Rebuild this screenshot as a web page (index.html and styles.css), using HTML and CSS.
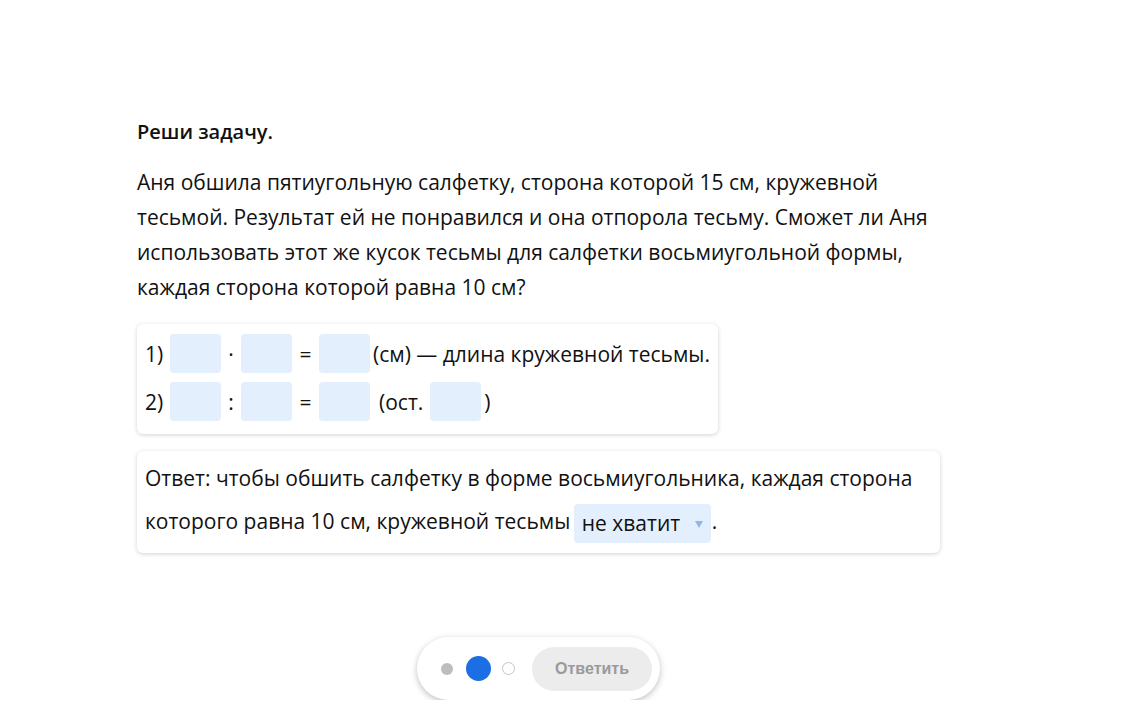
FILE: index.html
```html
<!DOCTYPE html>
<html lang="ru">
<head>
<meta charset="utf-8">
<link rel="stylesheet" href="styles.css">
</head>
<body>
<main class="task">
  <h1 class="title">Реши задачу.</h1>
  <p class="text">Аня обшила пятиугольную салфетку, сторона которой 15 см, кружевной тесьмой. Результат ей не понравился и она отпорола тесьму. Сможет ли Аня использовать этот же кусок тесьмы для салфетки восьмиугольной формы, каждая сторона которой равна 10 см?</p>
  <div class="card calc">
    <div class="row">
      <span class="num">1)</span><span class="inp"></span><span class="op">·</span><span class="inp"></span><span class="op eq">=</span><span class="inp"></span><span class="tail">(см) — длина кружевной тесьмы.</span>
    </div>
    <div class="row">
      <span class="num">2)</span><span class="inp"></span><span class="op">:</span><span class="inp"></span><span class="op eq">=</span><span class="inp"></span><span class="tail sp">(ост.</span><span class="inp"></span><span class="tail">)</span>
    </div>
  </div>
  <div class="card answer">
    Ответ: чтобы обшить салфетку в форме восьмиугольника, каждая сторона которого равна 10 см, кружевной тесьмы <span class="select"><span class="sel-text">не хватит</span><span class="arrow"></span></span><span class="dot-end">.</span>
  </div>
  <div class="footer">
    <div class="pill">
      <span class="dot done"></span>
      <span class="dot current"></span>
      <span class="dot empty"></span>
      <button class="btn">Ответить</button>
    </div>
  </div>
</main>
</body>
</html>
```

FILE: styles.css
```css
* { box-sizing: border-box; }
html, body { margin: 0; background: #fff; }
body {
  font-family: "Open Sans", "Noto Sans", sans-serif;
  color: #111;
}
.task {
  width: 803px;
  margin-left: 137px;
  padding-top: 118px;
}
.title {
  margin: 0;
  font-size: 20px;
  font-weight: 600;
  line-height: 28px;
}
.text {
  margin: 19px 0 0;
  font-size: 21px;
  line-height: 35px;
  width: 803px;
}
.card {
  background: #fff;
  border-radius: 6px;
  box-shadow: 0 1px 4px rgba(0,0,0,0.18);
}
.calc {
  display: inline-flex;
  flex-direction: column;
  gap: 9px;
  margin-top: 19px;
  padding: 10px 8px 13px 8px;
  width: 581px;
  font-size: 21px;
}
.row {
  display: flex;
  align-items: center;
  height: 39px;
}
.num { width: 25px; }
.inp {
  display: inline-block;
  width: 51px;
  height: 39px;
  background: #e3effc;
  border-radius: 4px;
}
.op { width: 20px; text-align: center; }
.op.eq { width: 27px; }
.tail { margin-left: 3px; }
.tail.sp { margin: 0 7px 0 9px; }
.answer {
  margin-top: 17px;
  padding: 6px 8px 10px 8px;
  font-size: 21px;
  line-height: 43px;
}
.select {
  display: inline-flex;
  align-items: center;
  height: 39px;
  line-height: 39px;
  padding: 0 8px;
  width: 137px;
  background: #e3effc;
  border-radius: 4px;
  position: relative;
  vertical-align: middle;
  margin-left: -2px;
  margin-right: 1px;
}
.arrow {
  position: absolute;
  right: 8px;
  top: 17px;
  width: 0; height: 0;
  border-left: 4px solid transparent;
  border-right: 4px solid transparent;
  border-top: 7px solid #8fb8e6;
}
.footer {
  display: flex;
  justify-content: center;
  margin-top: 84px;
}
.pill {
  display: flex;
  align-items: center;
  height: 63px;
  padding: 0 8px 0 24px;
  border-radius: 32px;
  background: #fff;
  box-shadow: 0 2px 6px rgba(0,0,0,0.25);
}
.dot { display: inline-block; border-radius: 50%; }
.dot.done { width: 12px; height: 12px; background: #bdbdbd; }
.dot.current { width: 25px; height: 25px; background: #1b6ee3; margin-left: 13px; }
.dot.empty { width: 13px; height: 13px; border: 1px solid #c4c4c4; margin-left: 11px; }
.btn {
  margin-left: 17px;
  width: 120px;
  height: 44px;
  border: none;
  border-radius: 22px;
  background: #ececec;
  color: #9a9a9a;
  font-family: "Liberation Sans", Arial, sans-serif;
  font-weight: 700;
  font-size: 16px;
}
```
